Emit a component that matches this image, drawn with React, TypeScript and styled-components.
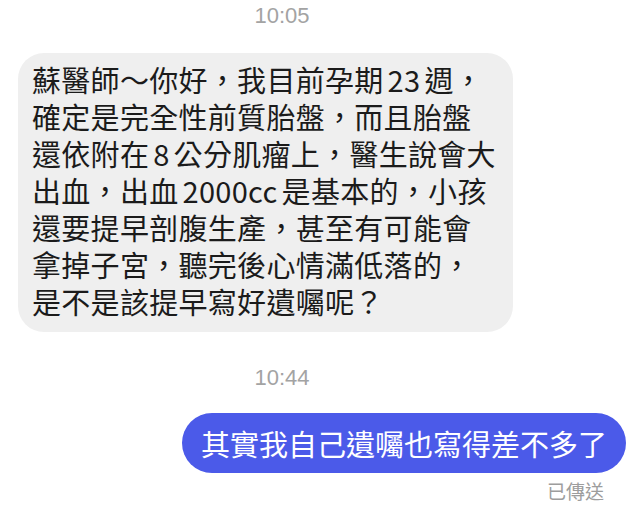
import React from 'react';
import styled, { createGlobalStyle } from 'styled-components';

const GlobalStyle = createGlobalStyle`
    html, body {
        margin: 0;
        padding: 0;
        background: #ffffff;
    }
    body {
        font-family: "Noto Sans CJK TC", "Noto Sans", sans-serif;
    }
`;

const Thread = styled.div`
    width: 640px;
    height: 518px;
    display: flex;
    flex-direction: column;
    padding-top: 3px;
    box-sizing: border-box;
    overflow: hidden;
`;

const Timestamp = styled.div<{ $gap: number }>`
    margin-top: ${({ $gap }) => $gap}px;
    padding-right: 76px;
    text-align: center;
    font-family: "Liberation Sans", "Noto Sans", sans-serif;
    font-size: 22px;
    line-height: 26px;
    color: #a3a3a3;
`;

const IncomingRow = styled.div`
    display: flex;
    padding-left: 18px;
    margin-top: 24px;
`;

const IncomingBubble = styled.div`
    width: 495px;
    box-sizing: border-box;
    padding: 8px 14px 12px 14px;
    background: #efefef;
    border-radius: 26px;
    color: #1b1b1b;
    font-size: 29px;
    line-height: 37px;
    letter-spacing: 0.3px;
`;

const Line = styled.div`
    height: 37px;
    white-space: nowrap;
`;

const OutgoingRow = styled.div`
    display: flex;
    justify-content: flex-end;
    padding-right: 14px;
    margin-top: 22px;
`;

const OutgoingBubble = styled.div`
    height: 60px;
    box-sizing: border-box;
    padding: 0 19px;
    display: flex;
    align-items: center;
    background: #4b5ae9;
    border-radius: 30px;
    color: #ffffff;
    font-size: 29px;
    white-space: nowrap;
`;

const Status = styled.div`
    margin-top: 7px;
    padding-right: 36px;
    text-align: right;
    font-size: 19px;
    line-height: 22px;
    color: #9d9d9d;
`;

const Num = styled.span`
    margin: 0 4px;
`;

const lines: React.ReactNode[] = [
    <>蘇醫師～你好，我目前孕期<Num>23</Num>週，</>,
    <>確定是完全性前質胎盤，而且胎盤</>,
    <>還依附在<Num>8</Num>公分肌瘤上，醫生說會大</>,
    <>出血，出血<Num>2000cc</Num>是基本的，小孩</>,
    <>還要提早剖腹生產，甚至有可能會</>,
    <>拿掉子宮，聽完後心情滿低落的，</>,
    <>是不是該提早寫好遺囑呢？</>,
];

const App: React.FC = () => {
    return (
        <>
            <GlobalStyle />
            <Thread>
                <Timestamp $gap={0}>10:05</Timestamp>
                <IncomingRow>
                    <IncomingBubble>
                        {lines.map((line, i) => (
                            <Line key={i}>{line}</Line>
                        ))}
                    </IncomingBubble>
                </IncomingRow>
                <Timestamp $gap={33}>10:44</Timestamp>
                <OutgoingRow>
                    <OutgoingBubble>其實我自己遺囑也寫得差不多了</OutgoingBubble>
                </OutgoingRow>
                <Status>已傳送</Status>
            </Thread>
        </>
    );
};

export default App;
